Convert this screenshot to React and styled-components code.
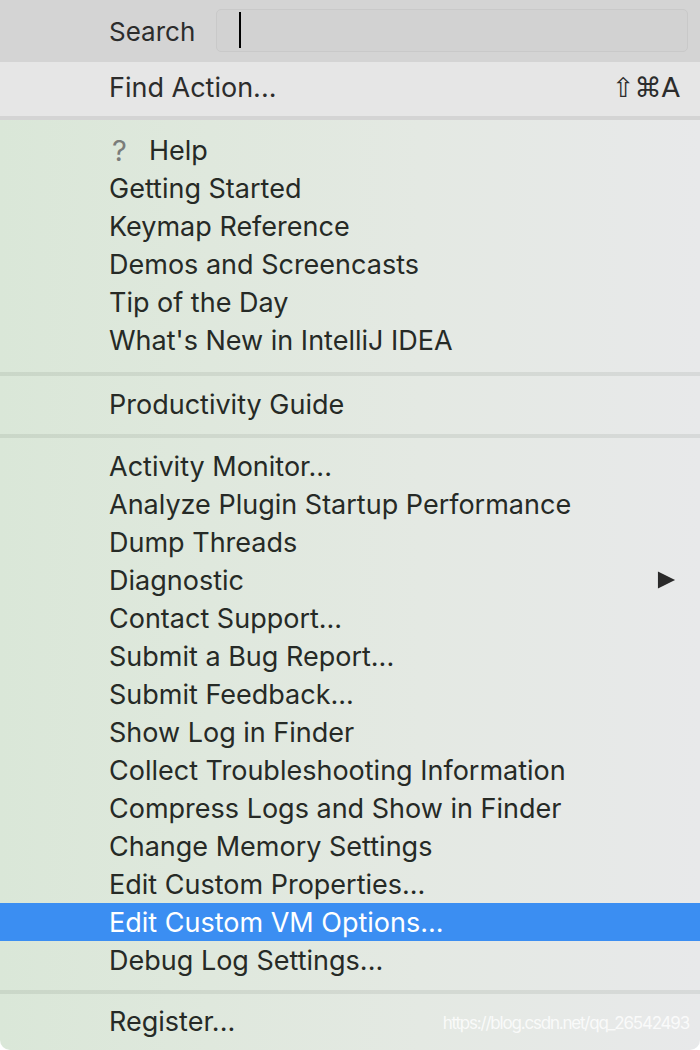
import styled, { createGlobalStyle } from 'styled-components';

const GlobalStyle = createGlobalStyle`
  html, body {
    margin: 0;
    padding: 0;
    background: #ffffff;
  }
  * {
    box-sizing: border-box;
  }
`;

const helpItems = [
  'Getting Started',
  'Keymap Reference',
  'Demos and Screencasts',
  'Tip of the Day',
  "What's New in IntelliJ IDEA",
];

const toolItems = [
  { label: 'Activity Monitor...' },
  { label: 'Analyze Plugin Startup Performance' },
  { label: 'Dump Threads' },
  { label: 'Diagnostic', submenu: true },
  { label: 'Contact Support...' },
  { label: 'Submit a Bug Report...' },
  { label: 'Submit Feedback...' },
  { label: 'Show Log in Finder' },
  { label: 'Collect Troubleshooting Information' },
  { label: 'Compress Logs and Show in Finder' },
  { label: 'Change Memory Settings' },
  { label: 'Edit Custom Properties...' },
  { label: 'Edit Custom VM Options...', active: true },
  { label: 'Debug Log Settings...' },
];

function App() {
  return (
    <>
      <GlobalStyle />
      <Menu>
        <SearchBar>
          <SearchLabel>Search</SearchLabel>
          <SearchField>
            <Caret />
          </SearchField>
        </SearchBar>
        <FindRow>
          <span>Find Action...</span>
          <Shortcut>⇧⌘A</Shortcut>
        </FindRow>
        <Separator $tone="grey" />

        <Section $top={11} $bottom={13}>
          <Item>
            <HelpMark>?</HelpMark>
            Help
          </Item>
          {helpItems.map((label) => (
            <Item key={label}>{label}</Item>
          ))}
        </Section>
        <Separator />

        <Section $top={9} $bottom={11}>
          <Item>Productivity Guide</Item>
        </Section>
        <Separator />

        <Section $top={9} $bottom={11}>
          {toolItems.map((it) => (
            <Item key={it.label} $active={it.active}>
              {it.label}
              {it.submenu && (
                <Arrow viewBox="0 0 20 20">
                  <path d="M1 1 L19 10 L1 19 Z" fill="currentColor" />
                </Arrow>
              )}
            </Item>
          ))}
        </Section>
        <Separator />

        <Section $top={8} $bottom={7}>
          <Item>Register...</Item>
        </Section>
        <Watermark>https://blog.csdn.net/qq_26542493</Watermark>
      </Menu>
    </>
  );
}

export default App;

const Menu = styled.div`
  position: relative;
  width: 700px;
  height: 1050px;
  overflow: hidden;
  border-radius: 0 0 10px 10px;
  background: linear-gradient(
    to right,
    #dae7d8 0%,
    #dfe8dd 30%,
    #e4e9e3 60%,
    #e8e9ea 100%
  );
  font-family: Inter, 'Noto Sans', sans-serif;
  font-size: 27px;
  color: #262a26;
`;

const SearchBar = styled.div`
  height: 62px;
  display: flex;
  align-items: center;
  gap: 21px;
  padding: 0 12px 0 109px;
  background: #d4d4d4;
`;

const SearchLabel = styled.span`
  color: #2c2c2c;
  font-size: 26px;
`;

const SearchField = styled.div`
  flex: 1;
  height: 43px;
  margin-top: -2px;
  display: flex;
  align-items: center;
  padding-left: 22px;
  background: #d2d2d2;
  border: 1px solid #c9c9c9;
  border-radius: 5px;
`;

const Caret = styled.div`
  width: 2px;
  height: 36px;
  background: #000;
`;

const FindRow = styled.div`
  height: 54px;
  display: flex;
  align-items: center;
  justify-content: space-between;
  padding: 0 20px 4px 109px;
  background: #e6e6e6;
  color: #2c2c2c;
`;

const Shortcut = styled.span`
  font-family: 'DejaVu Sans', Inter, sans-serif;
  font-size: 27px;
  letter-spacing: 0;
`;

const Separator = styled.div`
  height: 4px;
  background: ${(p) => (p.$tone === 'grey' ? '#d4d4d4' : 'rgba(0, 20, 0, 0.07)')};
`;

const Section = styled.div`
  padding: ${(p) => p.$top}px 0 ${(p) => p.$bottom}px;
`;

const Item = styled.div`
  height: 38px;
  display: flex;
  align-items: center;
  padding: 0 24px 0 109px;
  background: ${(p) => (p.$active ? '#3b8ef2' : 'transparent')};
  color: ${(p) => (p.$active ? '#ffffff' : 'inherit')};
  white-space: nowrap;
`;

const HelpMark = styled.span`
  width: 40px;
  padding-left: 3px;
  color: #7a7c7a;
  font-size: 29px;
`;

const Arrow = styled.svg`
  width: 19px;
  height: 20px;
  margin-left: auto;
  color: #2a2a2a;
`;

const Watermark = styled.div`
  position: absolute;
  right: 11px;
  bottom: 17px;
  font-family: Inter, sans-serif;
  font-size: 17px;
  color: rgba(255, 255, 255, 0.8);
  letter-spacing: -1.2px;
`;
